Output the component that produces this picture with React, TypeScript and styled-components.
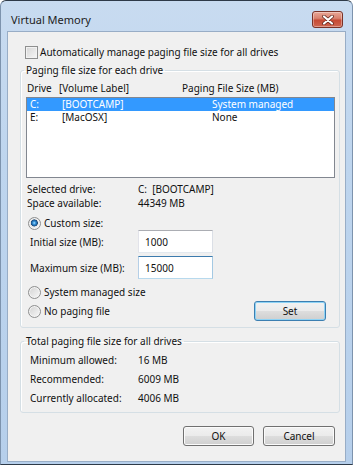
import styled, { createGlobalStyle } from 'styled-components';

const GlobalStyle = createGlobalStyle`
  html, body {
    margin: 0;
    padding: 0;
    background: #ffffff;
  }
  body {
    font-family: 'Noto Sans', 'Open Sans', sans-serif;
    font-size: 10px;
    color: #111111;
  }
`;

const drives = [
  { letter: 'C:', label: '[BOOTCAMP]', size: 'System managed', selected: true },
  { letter: 'E:', label: '[MacOSX]', size: 'None', selected: false },
];

const totals = [
  { label: 'Minimum allowed:', value: '16 MB' },
  { label: 'Recommended:', value: '6009 MB' },
  { label: 'Currently allocated:', value: '4006 MB' },
];

function CloseGlyph() {
  return (
    <svg width="12" height="10" viewBox="0 0 12 10">
      <path d="M2 1.5 L10 8.5 M10 1.5 L2 8.5" stroke="#5a2119" strokeWidth="3.6" strokeLinecap="round" />
      <path d="M2 1.5 L10 8.5 M10 1.5 L2 8.5" stroke="#ffffff" strokeWidth="2.2" strokeLinecap="round" />
    </svg>
  );
}

export default function App() {
  return (
    <>
      <GlobalStyle />
      <Window>
        <TitleBar>
          <Title>Virtual Memory</Title>
          <CloseButton>
            <CloseGlyph />
          </CloseButton>
        </TitleBar>

        <Client>
          <CheckRow>
            <CheckBox />
            <span>Automatically manage paging file size for all drives</span>
          </CheckRow>

          <GroupBox>
            <Legend>Paging file size for each drive</Legend>
            <ColumnHeader>
              <span>Drive</span>
              <span>[Volume Label]</span>
              <span>Paging File Size (MB)</span>
            </ColumnHeader>
            <DriveList>
              {drives.map((d) => (
                <DriveRow key={d.letter} $selected={d.selected}>
                  <span>{d.letter}</span>
                  <span>{d.label}</span>
                  <span>{d.size}</span>
                </DriveRow>
              ))}
            </DriveList>

            <InfoGrid>
              <span>Selected drive:</span>
              <span>C:&nbsp; [BOOTCAMP]</span>
              <span>Space available:</span>
              <span>44349 MB</span>
            </InfoGrid>

            <RadioRow $gap={6}>
              <Radio $checked />
              <span>Custom size:</span>
            </RadioRow>

            <SizeRow $gap={0}>
              <span>Initial size (MB):</span>
              <TextBox readOnly defaultValue="1000" />
            </SizeRow>
            <SizeRow $gap={3}>
              <span>Maximum size (MB):</span>
              <TextBox readOnly defaultValue="15000" $focused />
            </SizeRow>

            <RadioRow $gap={6}>
              <Radio />
              <span>System managed size</span>
            </RadioRow>

            <ActionRow>
              <RadioRow $gap={0}>
                <Radio />
                <span>No paging file</span>
              </RadioRow>
              <Button $width={72} $default>
                Set
              </Button>
            </ActionRow>
          </GroupBox>

          <GroupBox $top={6} $bottom={4}>
            <Legend>Total paging file size for all drives</Legend>
            <TotalsGrid>
              {totals.map((t) => (
                <TotalsItem key={t.label}>
                  <span>{t.label}</span>
                  <span>{t.value}</span>
                </TotalsItem>
              ))}
            </TotalsGrid>
          </GroupBox>

          <ButtonBar>
            <Button $width={71}>OK</Button>
            <Button $width={72}>Cancel</Button>
          </ButtonBar>
        </Client>
      </Window>
    </>
  );
}

const Window = styled.div`
  box-sizing: border-box;
  width: 353px;
  height: 465px;
  display: flex;
  flex-direction: column;
  border: 1px solid #7d93ad;
  border-top-color: #2e3a48;
  border-bottom-color: #2e3a48;
  border-radius: 6px 6px 0 0;
  background: linear-gradient(180deg, #c8dbf0 0%, #bed5ee 35%, #b6cfeb 100%);
`;

const TitleBar = styled.div`
  height: 30px;
  display: flex;
  align-items: flex-start;
  justify-content: space-between;
  flex-shrink: 0;
`;

const Title = styled.div`
  margin: 11px 0 0 10px;
  font-size: 11px;
  line-height: 16px;
  color: #1c1c1c;
`;

const CloseButton = styled.div`
  box-sizing: border-box;
  width: 31px;
  height: 17px;
  margin: 10px 9px 0 0;
  display: flex;
  align-items: center;
  justify-content: center;
  border: 1px solid #7a3227;
  border-radius: 3px;
  background: linear-gradient(180deg, #e9a797 0%, #d9826f 42%, #c64a34 55%, #cf6650 100%);
  box-shadow: inset 0 0 0 1px rgba(255, 255, 255, 0.35);
`;

const Client = styled.div`
  flex: 1;
  margin: 0 6px 2px 6px;
  display: flex;
  flex-direction: column;
  border: 1px solid #98adc6;
  background: #f0f0f0;
`;

const CheckRow = styled.label`
  display: flex;
  align-items: center;
  gap: 2px;
  height: 16px;
  margin: 12px 0 0 17px;
`;

const CheckBox = styled.span`
  box-sizing: border-box;
  width: 13px;
  height: 13px;
  border: 1px solid #8e8f8f;
  background: linear-gradient(135deg, #d6d6d6 0%, #f6f6f6 100%);
  box-shadow: inset 0 0 0 1px #f2f2f2;
`;

const GroupBox = styled.fieldset<{ $top?: number; $bottom?: number }>`
  margin: ${(p) => p.$top ?? 3}px 5px 0 12px;
  padding: 0 0 ${(p) => p.$bottom ?? 6}px 0;
  min-inline-size: 0;
  border: 1px solid #d5dfe5;
  border-radius: 3px;
  box-shadow: inset 1px 1px 0 #ffffff;
`;

const Legend = styled.legend`
  margin-left: 3px;
  padding: 0 2px;
  line-height: 14px;
`;

const ColumnHeader = styled.div`
  display: grid;
  grid-template-columns: 32px 123px 1fr;
  margin-top: 4px;
  padding-left: 6px;
  line-height: 14px;
`;

const DriveList = styled.div`
  box-sizing: border-box;
  height: 81px;
  margin: 2px 4px 0 5px;
  border: 1px solid #828790;
  background: #ffffff;
`;

const DriveRow = styled.div<{ $selected?: boolean }>`
  display: grid;
  grid-template-columns: 32px 150px 1fr;
  height: 13px;
  padding-left: 3px;
  line-height: 13px;
  background: ${(p) => (p.$selected ? '#3399ff' : 'transparent')};
  color: ${(p) => (p.$selected ? '#ffffff' : '#111111')};
`;

const InfoGrid = styled.div`
  display: grid;
  grid-template-columns: 111px 1fr;
  margin-top: 4px;
  padding-left: 6px;
  line-height: 14px;
`;

const RadioRow = styled.label<{ $gap: number }>`
  display: flex;
  align-items: center;
  gap: 3px;
  height: 14px;
  margin: ${(p) => p.$gap}px 0 0 7px;
`;

const Radio = styled.span<{ $checked?: boolean }>`
  box-sizing: border-box;
  width: 13px;
  height: 13px;
  border-radius: 50%;
  border: 1px solid #8e8f8f;
  background: ${(p) =>
    p.$checked
      ? 'radial-gradient(circle at 48% 45%, #b7e3fd 0, #3b9be0 1.3px, #1d5c99 2.8px, #244d78 3.3px, transparent 3.8px), linear-gradient(135deg, #d2d2d2 0%, #f8f8f8 100%)'
      : 'linear-gradient(135deg, #d2d2d2 0%, #f8f8f8 100%)'};
  box-shadow: inset 0 0 0 1px #f4f4f4;
`;

const SizeRow = styled.div<{ $gap: number }>`
  display: grid;
  grid-template-columns: 108px 75px;
  align-items: center;
  margin-top: ${(p) => p.$gap}px;
  padding-left: 9px;
`;

const TextBox = styled.input<{ $focused?: boolean }>`
  box-sizing: border-box;
  width: 75px;
  height: 23px;
  margin: 0;
  padding: 0 0 0 6px;
  border: 1px solid;
  border-color: ${(p) =>
    p.$focused ? '#3d7bad #a4c9e3 #b7d9ed #b5cfe7' : '#abadb3 #dbdfe6 #e3e9ef #e2e3ea'};
  background: #ffffff;
  font: inherit;
  color: #111111;
  outline: none;
`;

const ActionRow = styled.div`
  display: flex;
  align-items: center;
  justify-content: space-between;
  height: 20px;
  margin: 2px 13px 0 0;
`;

const Button = styled.button<{ $width: number; $default?: boolean }>`
  box-sizing: border-box;
  width: ${(p) => p.$width}px;
  height: 20px;
  padding: 0;
  border: 1px solid ${(p) => (p.$default ? '#3c7fb1' : '#707070')};
  border-radius: 3px;
  background: linear-gradient(180deg, #f2f2f2 0%, #ebebeb 48%, #dddddd 52%, #cfcfcf 100%);
  box-shadow: inset 0 0 0 1px ${(p) => (p.$default ? '#8ed3f5' : '#fbfbfb')};
  font: inherit;
  color: #111111;
  line-height: 18px;
`;

const TotalsGrid = styled.div`
  margin-top: 3px;
  padding-left: 9px;
`;

const TotalsItem = styled.div`
  display: grid;
  grid-template-columns: 108px 1fr;
  line-height: 19px;
`;

const ButtonBar = styled.div`
  display: flex;
  justify-content: flex-end;
  gap: 9px;
  margin: 13px 10px 0 0;
`;
